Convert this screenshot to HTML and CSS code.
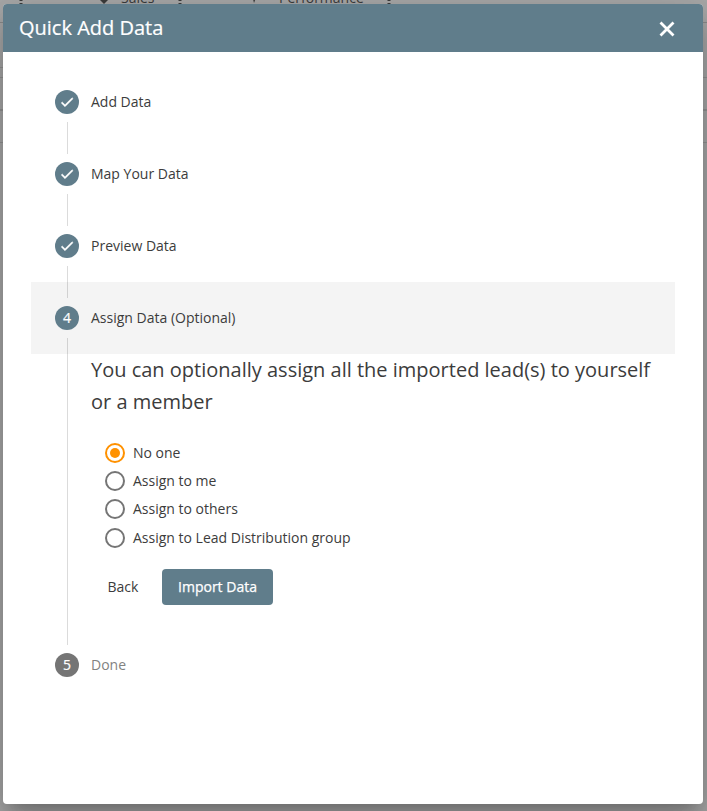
FILE: index.html
```html
<!DOCTYPE html>
<html lang="en">
<head>
<meta charset="utf-8">
<title>Quick Add Data</title>
<link rel="stylesheet" href="styles.css">
</head>
<body>
<div class="backdrop" aria-hidden="true">
  <div class="nav">
    <svg class="dots dots-a" viewBox="0 0 4 4"><path d="M.5 0h3v1h-3zM.5 3h3v1h-3z"/></svg>
    <svg class="nav-icon sales-icon" viewBox="0 0 14 12"><path d="M1 5 7 11l6-6-3-4H4z" fill="currentColor"/></svg>
    <span class="nav-text sales">Sales</span>
    <svg class="dots dots-b" viewBox="0 0 4 4"><path d="M.5 0h3v1h-3zM.5 3h3v1h-3z"/></svg>
    <svg class="nav-icon perf-icon" viewBox="0 0 14 12"><path d="M3 2h5L5 10z" fill="currentColor"/></svg>
    <span class="nav-text perf">Performance</span>
    <svg class="dots dots-c" viewBox="0 0 4 4"><path d="M.5 0h3v1h-3zM.5 3h3v1h-3z"/></svg>
  </div>
  <div class="row row-a"></div>
  <div class="row row-b"></div>
  <div class="row row-c"></div>
  <div class="row row-d"></div>
</div>
<main class="dialog">
  <header class="bar">
    <h1>Quick Add Data</h1>
    <button class="close" aria-label="Close"><svg viewBox="0 0 24 24"><path d="M5.5 5.5l13 13M18.500 5.500l-13 13"/></svg></button>
  </header>
  <div class="stepper">
    <section class="step">
      <div class="head"><span class="badge"><svg viewBox="0 0 24 24"><path d="M9 16.170 4.830 12l-1.420 1.410L9 19 21 7l-1.410-1.410z"/></svg></span><span class="label">Add Data</span></div>
    </section>
    <section class="step">
      <div class="head"><span class="badge"><svg viewBox="0 0 24 24"><path d="M9 16.170 4.830 12l-1.420 1.410L9 19 21 7l-1.410-1.410z"/></svg></span><span class="label">Map Your Data</span></div>
    </section>
    <section class="step">
      <div class="head"><span class="badge"><svg viewBox="0 0 24 24"><path d="M9 16.170 4.830 12l-1.420 1.410L9 19 21 7l-1.410-1.410z"/></svg></span><span class="label">Preview Data</span></div>
    </section>
    <section class="step">
      <div class="head active"><span class="badge">4</span><span class="label">Assign Data (Optional)</span></div>
      <div class="content">
        <h2>You can optionally assign all the imported lead(s) to yourself or a member</h2>
        <div class="options">
          <div class="option checked"><span class="radio"></span><span class="text">No one</span></div>
          <div class="option"><span class="radio"></span><span class="text">Assign to me</span></div>
          <div class="option"><span class="radio"></span><span class="text">Assign to others</span></div>
          <div class="option"><span class="radio"></span><span class="text">Assign to Lead Distribution group</span></div>
        </div>
        <div class="actions"><button class="btn back">Back</button><button class="btn primary">Import Data</button></div>
      </div>
    </section>
    <section class="step">
      <div class="head pending"><span class="badge">5</span><span class="label">Done</span></div>
    </section>
  </div>
</main>
</body>
</html>
```

FILE: styles.css
```css
* { box-sizing: border-box; }
body {
  margin: 0;
  height: 811px;
  padding: 4px 4px 7px 3px;
  overflow: hidden;
  background: #a9a9a9;
  color: #3c3c3c;
  font-family: "Open Sans", sans-serif;
  font-size: 14px;
  font-weight: 400;
}
h1, h2 { margin: 0; }
button { border: 0; font: inherit; color: inherit; background: none; padding: 0; }

/* Dimmed page behind the dialog */
.backdrop { position: absolute; inset: 0; overflow: hidden; color: #3c3c3c; }
.nav { height: 23px; border-bottom: 1px solid #8c8c8c; }
.nav > * { position: absolute; }
.nav-text { top: -12px; font-size: 14px; line-height: 19px; }
.sales { left: 121px; }
.perf { left: 279px; }
.dots { top: 0; width: 4px; height: 4px; fill: currentColor; }
.dots-a { left: 19px; }
.dots-b { left: 178px; }
.dots-c { left: 387px; }
.nav-icon { top: -7px; width: 14px; height: 12px; }
.sales-icon { left: 97px; }
.perf-icon { left: 249px; }
.row { border-bottom: 1px solid #949494; }
.row-a { width: 50%; height: 45px; }
.row-b { height: 10px; }
.row-c { height: 33px; border-bottom-width: 2px; }
.row-d { height: 32px; }

.dialog {
  position: relative;
  height: 800px;
  border-radius: 4px;
  overflow: hidden;
  background: #fff;
  box-shadow: 0 11px 15px -7px rgba(0,0,0,.2), 0 24px 38px 3px rgba(0,0,0,.14), 0 9px 46px 8px rgba(0,0,0,.12);
}
.bar {
  display: flex;
  align-items: center;
  justify-content: space-between;
  height: 48px;
  padding: 0 24px 0 16px;
  background: #607d8b;
  color: #fff;
}
.bar h1 { font-size: 20px; line-height: 32px; font-weight: 400; -webkit-text-stroke: .2px #fff; }
.close { width: 24px; height: 24px; margin-top: 2px; }
.close svg { display: block; width: 24px; height: 24px; fill: none; stroke: #fff; stroke-width: 2.800; }

.stepper { padding: 14px 28px; }
.step { position: relative; }
.step:not(:last-child)::after {
  content: "";
  position: absolute;
  left: 36px;
  top: 56px;
  bottom: -16px;
  z-index: 1;
  border-left: 1px solid rgba(0,0,0,.14);
}
.head { display: flex; align-items: center; gap: 12px; height: 72px; padding: 0 24px; }
.label, .text { padding-bottom: 2px; }
.active { background: #f4f4f4; }
.badge {
  display: flex;
  align-items: center;
  justify-content: center;
  width: 24px;
  height: 24px;
  padding-bottom: 1px;
  border-radius: 50%;
  background: #607d8b;
  color: #fff;
  line-height: 20px;
  -webkit-text-stroke: .2px #fff;
}
.badge svg { width: 16px; height: 16px; margin-top: 1px; fill: #fff; stroke: #fff; stroke-width: .8; }
.pending .badge { background: #757575; }
.pending .label { color: #828282; }

.content { height: 275px; padding-left: 60px; }
.content h2 { font-size: 20px; line-height: 32px; font-weight: 400; }
.options { padding: 21px 0 0 14px; }
.option { display: flex; align-items: center; gap: 8px; height: 28px; }
.option:last-child { margin-top: 1px; }
.option:last-child .text { padding-bottom: 1px; }
.radio {
  display: grid;
  place-items: center;
  width: 20px;
  height: 20px;
  border: 2px solid #757575;
  border-radius: 50%;
}
.checked .radio { border-color: #ff9100; }
.checked .radio::after { content: ""; width: 10px; height: 10px; border-radius: 50%; background: #ff9100; }
.actions { display: flex; padding-top: 17px; }
.btn { height: 36px; line-height: 36px; border-radius: 4px; }
.back { width: 64px; margin-right: 7px; }
.primary { width: 111px; background: #607d8b; color: #fff; -webkit-text-stroke: .25px #fff; }
```
